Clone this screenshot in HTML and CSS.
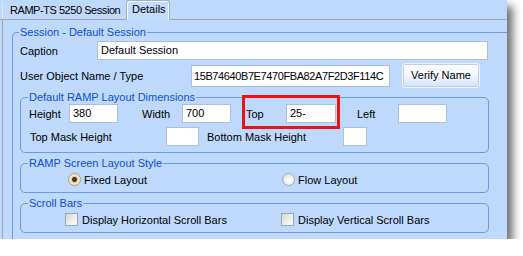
FILE: index.html
```html
<!DOCTYPE html>
<html>
<head>
<meta charset="utf-8">
<link rel="stylesheet" href="styles.css">
</head>
<body>
<div class="window">
  <div class="tabs">
    <div class="tab">RAMP-TS 5250 Session</div>
    <div class="tab tab-active">Details</div>
  </div>
  <div class="page">
    <fieldset class="group group-outer">
      <legend>Session - Default Session</legend>
      <div class="row row-caption">
        <span class="lbl lbl-caption">Caption</span>
        <span class="input input-caption">Default Session</span>
      </div>
      <div class="row row-uo">
        <span class="lbl lbl-uo">User Object Name / Type</span>
        <span class="input input-uo">15B74640B7E7470FBA82A7F2D3F114C</span>
        <span class="button">Verify Name</span>
      </div>
      <fieldset class="group group-dims">
        <legend>Default RAMP Layout Dimensions</legend>
        <div class="row row-dims1">
          <span class="lbl w40">Height</span>
          <span class="input w49">380</span>
          <span class="lbl w40 ml24">Width</span>
          <span class="input w49">700</span>
          <span class="highlight ml15">
            <span class="lbl w40">Top</span>
            <span class="input w50">25-</span>
          </span>
          <span class="lbl w41 ml21">Left</span>
          <span class="input w49"></span>
        </div>
        <div class="row row-dims2">
          <span class="lbl w136">Top Mask Height</span>
          <span class="input w33"></span>
          <span class="lbl w136 ml8">Bottom Mask Height</span>
          <span class="input w24"></span>
        </div>
      </fieldset>
      <fieldset class="group group-style">
        <legend>RAMP Screen Layout Style</legend>
        <div class="row row-opts row-radio">
          <span class="opt opt-first"><span class="radio radio-on"></span><span>Fixed Layout</span></span>
          <span class="opt"><span class="radio"></span><span>Flow Layout</span></span>
        </div>
      </fieldset>
      <fieldset class="group group-scroll">
        <legend>Scroll Bars</legend>
        <div class="row row-opts row-check">
          <span class="opt opt-first2"><span class="check"></span><span>Display Horizontal Scroll Bars</span></span>
          <span class="opt"><span class="check"></span><span>Display Vertical Scroll Bars</span></span>
        </div>
      </fieldset>
    </fieldset>
  </div>
</div>
</body>
</html>
```
FILE: styles.css
```css
html, body {
  margin: 0;
  padding: 0;
  background: #ffffff;
}
.window {
  width: 507px;
  height: 239px;
  background: #bed9fc;
  box-shadow: 6px 6px 8px rgba(0, 0, 0, 0.55);
  overflow: hidden;
  font-family: "Liberation Sans", Arial, sans-serif;
  font-size: 11px;
  color: #000;
  box-sizing: border-box;
}
.tabs {
  height: 20px;
  box-sizing: border-box;
  border-bottom: 1px solid #a5a5a5;
  display: flex;
  align-items: flex-end;
  padding-left: 2px;
}
.tab {
  width: 124px;
  height: 17px;
  box-sizing: border-box;
  line-height: 17px;
  padding-left: 7px;
  border-left: 1px solid #d9e8fb;
  white-space: nowrap;
  letter-spacing: -0.45px;
  overflow: hidden;
}
.tab-active {
  width: 44px;
  height: 20px;
  line-height: 16px;
  padding-left: 5px;
  margin-bottom: -1px;
  background: #c3dcfc;
  border: 1px solid #9fb2c9;
  border-bottom: none;
  border-radius: 3px 3px 0 0;
  box-shadow: inset 1px 1px 0 #f4f9ff, inset -1px 0 0 #e8f1fd;
  letter-spacing: 0;
}
.page {
  margin-left: 2px;
  border-left: 1px solid #a5a5a5;
  height: 219px;
  box-sizing: border-box;
  padding: 6px 0 0 9px;
}
.group {
  margin: 0;
  padding: 0;
  border: 1px solid #6f9ad8;
  border-radius: 5px;
  min-width: 0;
  box-sizing: border-box;
}
.group legend {
  color: #0c4ed8;
  font-size: 11px;
  line-height: 13px;
  padding: 0 1px;
  margin-left: 6px;
}
.group-outer {
  border-right: none;
  border-bottom: none;
  border-radius: 5px 0 0 0;
  height: 213px;
}
.group-outer > legend {
  margin-left: 6px;
}
.row {
  display: flex;
  align-items: center;
  white-space: nowrap;
}
.lbl {
  flex: none;
}
.input {
  flex: none;
  box-sizing: border-box;
  background: #ffffff;
  border: 1px solid #a7c0e3;
  height: 19px;
  line-height: 17px;
  padding-left: 3px;
  overflow: hidden;
}
.row-caption {
  margin-top: 2px;
  padding-left: 7px;
  height: 19px;
}
.lbl-caption { width: 77px; }
.input-caption { width: 391px; }
.row-uo {
  margin-top: 3px;
  padding-left: 7px;
  height: 25px;
}
.lbl-uo { width: 171px; }
.input-uo {
  width: 199px;
  height: 22px;
  line-height: 20px;
  font-size: 11px;
  letter-spacing: -0.4px;
  padding-left: 2px;
}
.button {
  flex: none;
  margin-left: 12px;
  width: 78px;
  height: 25px;
  box-sizing: border-box;
  border: 1px solid #eef4fd;
  border-radius: 3px;
  background: linear-gradient(#ffffff 0%, #f3f7fd 45%, #d3e3f8 100%);
  box-shadow: inset 0 0 0 1px #bcd0ee;
  text-align: center;
  line-height: 23px;
  font-size: 11px;
}
.group-dims {
  margin: 3px 0 0 7px;
  width: 469px;
  padding: 0 0 6px 0;
}
.group-dims > legend { margin-left: 7px; }
.row-dims1 {
  padding-left: 8px;
  height: 19px;
}
.row-dims2 {
  margin-top: 4px;
  padding-left: 9px;
  height: 19px;
}
.w40 { width: 40px; }
.w41 { width: 41px; }
.w49 { width: 49px; }
.w50 { width: 50px; }
.w33 { width: 33px; }
.w24 { width: 24px; }
.w136 { width: 136px; }
.ml8 { margin-left: 8px; }
.ml15 { margin-left: 15px; }
.ml21 { margin-left: 21px; }
.ml24 { margin-left: 24px; }
.highlight {
  position: relative;
  display: flex;
  align-items: center;
  flex: none;
}
.highlight::after {
  content: "";
  position: absolute;
  left: -4px;
  right: -4px;
  top: -9px;
  bottom: -6px;
  border: 3px solid #ee1111;
  pointer-events: none;
}
.group-style {
  margin: 4px 0 0 7px;
  width: 469px;
  padding: 0 0 6px 0;
}
.group-style > legend { margin-left: 7px; }
.group-scroll {
  margin: 4px 0 0 7px;
  width: 469px;
  padding: 0 0 6px 0;
}
.group-scroll > legend { margin-left: 7px; }
.row-opts {
  margin-top: 3px;
  height: 13px;
}
.row-radio { padding-left: 47px; }
.row-check { padding-left: 44px; }
.opt {
  display: flex;
  align-items: center;
  flex: none;
}
.opt-first { width: 214px; }
.opt-first2 { width: 216px; }
.radio {
  width: 13px;
  height: 13px;
  box-sizing: border-box;
  border-radius: 50%;
  border: 1px solid #a2acb8;
  background: radial-gradient(circle at 60% 60%, #ffffff 0%, #f1f1ee 40%, #cfd2d6 100%);
  margin-right: 3px;
}
.radio-on {
  border-color: #b99b74;
  background: radial-gradient(circle, #2a3f33 0, #2a3f33 2px, #f4c79a 3px, #f8e7d2 4.5px, #e6e3df 100%);
}
.check {
  width: 13px;
  height: 13px;
  box-sizing: border-box;
  border: 1px solid #98a9bf;
  background: linear-gradient(135deg, #d7d7d2 0%, #efefec 60%, #fbfbfb 100%);
  margin-right: 4px;
}
```
